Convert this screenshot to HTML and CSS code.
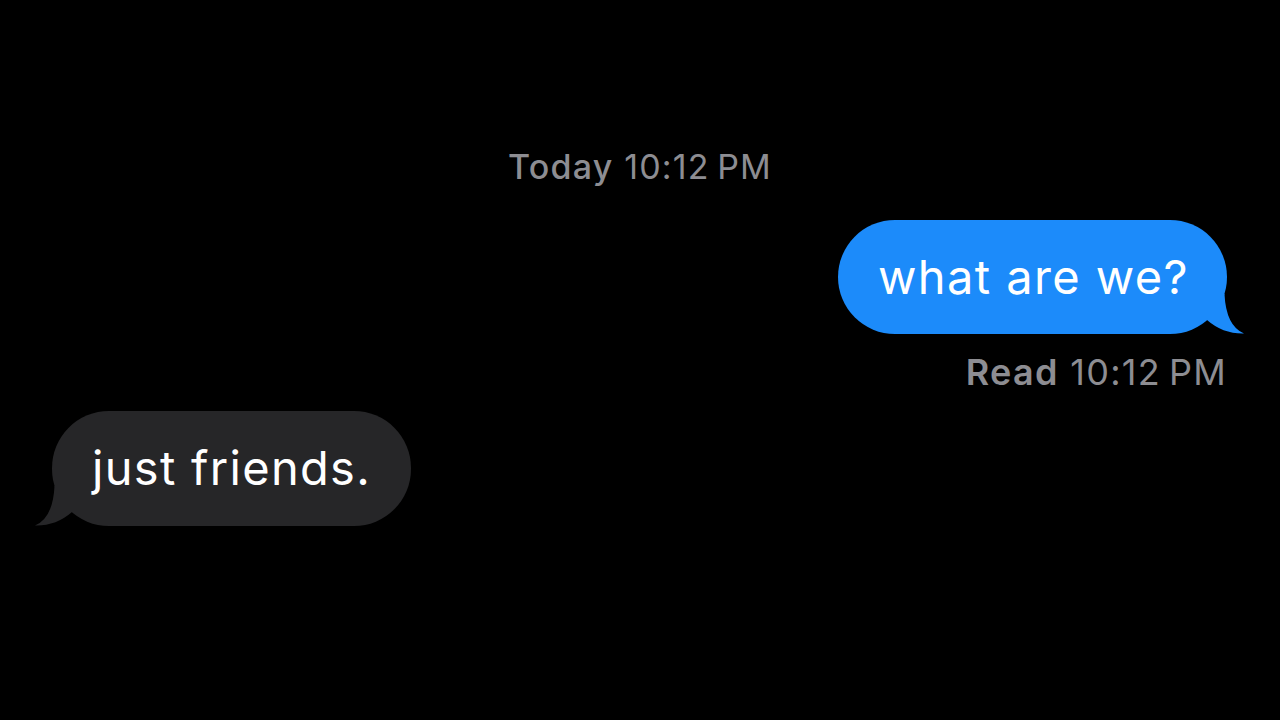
FILE: index.html
```html
<!DOCTYPE html>
<html lang="en">
<head>
<meta charset="utf-8">
<title>Messages</title>
<link rel="stylesheet" href="styles.css">
</head>
<body>
<main class="thread">
  <div class="stamp"><span class="stamp-label">Today</span> 10:12&#8201;PM</div>
  <div class="row row-out">
    <div class="bubble bubble-out">what are we?
      <svg class="tail tail-out" viewBox="0 0 40 40" width="40" height="40" aria-hidden="true">
        <path d="M0 0 L19.5 0 Q21 32 39 39.5 Q18 40 2 26 L0 26 Z" fill="#1c8bfa"/>
      </svg>
    </div>
  </div>
  <div class="receipt"><span class="receipt-label">Read</span> 10:12&#8201;PM</div>
  <div class="row row-in">
    <div class="bubble bubble-in">just friends.
      <svg class="tail tail-in" viewBox="0 0 40 40" width="40" height="40" aria-hidden="true">
        <path d="M0 0 L19.5 0 Q21 32 39 39.5 Q18 40 2 26 L0 26 Z" fill="#262628"/>
      </svg>
    </div>
  </div>
</main>
</body>
</html>
```
FILE: styles.css
```css
html, body {
  margin: 0;
  padding: 0;
  background: #000;
}
body {
  width: 1280px;
  height: 720px;
  overflow: hidden;
  font-family: Inter, "Noto Sans", "Liberation Sans", sans-serif;
  color: #fff;
}
.thread {
  display: flex;
  flex-direction: column;
  padding-top: 147px;
}
.stamp {
  height: 40px;
  line-height: 40px;
  text-align: center;
  font-size: 34px;
  letter-spacing: 1.2px;
  color: #8d8d92;
  margin-bottom: 33px;
}
.stamp-label {
  font-weight: 500;
}
.row {
  display: flex;
}
.row-out {
  justify-content: flex-end;
  padding-right: 53px;
}
.row-in {
  justify-content: flex-start;
  padding-left: 52px;
  margin-top: 19px;
}
.bubble {
  position: relative;
  height: 114px;
  display: flex;
  align-items: center;
  padding: 0 38px 2px 40px;
  box-sizing: border-box;
  border-radius: 57px;
  font-size: 47px;
  letter-spacing: 1.4px;
  color: #fff;
}
.bubble-out {
  background: #1c8bfa;
}
.bubble-in {
  background: #262628;
  height: 115px;
  padding-right: 40px;
  padding-left: 40px;
  letter-spacing: 1.3px;
}
.tail {
  position: absolute;
  bottom: 0;
  display: block;
}
.tail-out {
  right: -18px;
}
.tail-in {
  left: -18px;
  transform: scaleX(-1);
}
.receipt {
  height: 40px;
  line-height: 40px;
  margin-top: 18px;
  text-align: right;
  padding-right: 53px;
  font-size: 36px;
  letter-spacing: 1.3px;
  color: #8d8d92;
}
.receipt-label {
  font-weight: 600;
}
```
